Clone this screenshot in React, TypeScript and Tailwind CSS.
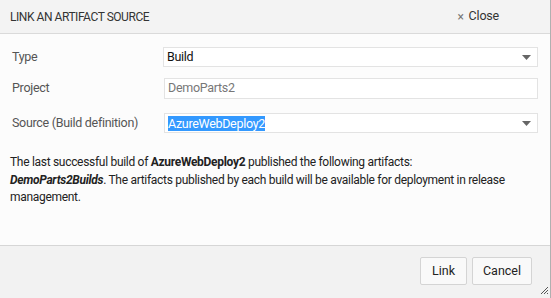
import React from "react";

function Caret() {
  return (
    <svg width="9" height="5" viewBox="0 0 9 5" className="shrink-0">
      <path d="M0 0 H9 L4.5 5 Z" fill="#666" />
    </svg>
  );
}

export default function App() {
  return (
    <div
      className="w-[551px] h-[298px] flex flex-col bg-[#fcfcfc] border-r border-[#b0b0b0] text-[#222] overflow-hidden"
      style={{ fontFamily: 'Roboto, "Open Sans", sans-serif' }}
    >
      <div className="h-[34px] shrink-0 flex items-center justify-between pl-[10px] pr-[51px] bg-[#f3f3f3] border-b border-[#dadada]">
        <span className="text-[12px] tracking-[-0.45px] text-[#333]">LINK AN ARTIFACT SOURCE</span>
        <span className="text-[12.5px] tracking-[-0.2px] text-[#333] flex items-center gap-[5px]">
          <span className="text-[12px] text-[#777] leading-none">×</span>Close
        </span>
      </div>
      <div className="flex-1 flex flex-col pl-[12px] pr-[12px] tracking-[-0.3px]">
        <div className="flex items-center mt-[13px]">
          <div className="w-[151px] text-[12.5px] text-[#555]">Type</div>
          <div className="w-[375px] h-[20px] border border-[#e3e3e3] bg-white flex items-center justify-between pl-[3px] pr-[6px]">
            <span className="text-[12.5px] text-[#111]">Build</span>
            <Caret />
          </div>
        </div>
        <div className="flex items-center mt-[11px]">
          <div className="w-[152px] text-[12.5px] text-[#555]">Project</div>
          <div className="w-[374px] h-[21px] border border-[#e3e3e3] bg-white flex items-center pl-[3px]">
            <span className="text-[12.5px] text-[#777]">DemoParts2</span>
          </div>
        </div>
        <div className="flex items-center mt-[14px]">
          <div className="w-[152px] text-[12.5px] text-[#555]">Source (Build definition)</div>
          <div className="w-[374px] h-[20px] border border-[#e3e3e3] bg-white flex items-center justify-between pl-[3px] pr-[6px]">
            <span className="text-[12.5px] text-white bg-[#3399ff] leading-[15px]">AzureWebDeploy2</span>
            <Caret />
          </div>
        </div>
        <p className="mt-[21px] ml-[-2px] w-[510px] text-[12px] leading-[17.5px] text-[#222]">
          The last successful build of <b>AzureWebDeploy2</b> published the following artifacts:
          <br />
          <b><i>DemoParts2Builds</i></b>. The artifacts published by each build will be available for deployment in release management.
        </p>
      </div>
      <div className="h-[53px] shrink-0 bg-[#f2f2f2] border-t border-[#d6d6d6] flex justify-end items-start pt-[11px] pr-[18px] gap-[5px] relative">
        <button className="w-[47px] h-[28px] border border-[#d4d4d4] bg-[#f9f9f9] rounded-[2px] text-[12.5px] text-[#222]">Link</button>
        <button className="w-[60px] h-[28px] border border-[#d4d4d4] bg-[#f9f9f9] rounded-[2px] text-[12.5px] text-[#222]">Cancel</button>
        <svg width="9" height="9" viewBox="0 0 9 9" className="absolute right-[1px] bottom-[3px]">
          <path d="M8 1 L1 8 M8 4 L4 8 M8 7 L7 8" stroke="#555" strokeWidth="1" />
        </svg>
      </div>
    </div>
  );
}
